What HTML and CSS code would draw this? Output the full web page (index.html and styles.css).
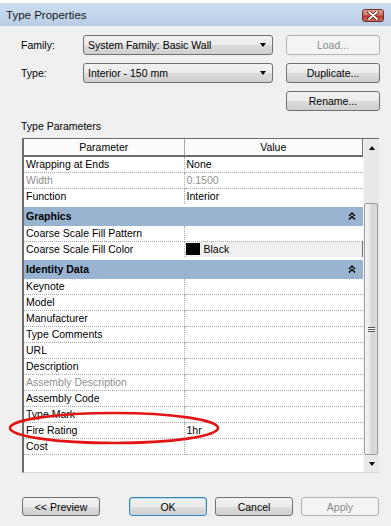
FILE: index.html
```html
<!DOCTYPE html>
<html lang="en">
<head>
  <meta charset="UTF-8">
  <title>Type Properties</title>
  <link rel="stylesheet" href="styles.css">
</head>
<body>
  <div class="window">

    <!-- Title Bar -->
    <div class="titlebar">
      <span class="title">Type Properties</span>
      <button class="close-btn">
        <svg width="12" height="9" viewBox="0 0 12 9">
          <path d="M2 1 L10 8 M10 1 L2 8" stroke="#5a1e16" stroke-width="3.4" stroke-linecap="round"/>
          <path d="M2 1 L10 8 M10 1 L2 8" stroke="#fff" stroke-width="1.8" stroke-linecap="round"/>
        </svg>
      </button>
    </div>

    <!-- Family / Type -->
    <div class="type-form">
      <label>Family:</label>
      <div class="combo"><span>System Family: Basic Wall</span><span class="arrow"></span></div>
      <button class="btn" disabled>Load...</button>

      <label>Type:</label>
      <div class="combo"><span>Interior - 150 mm</span><span class="arrow"></span></div>
      <button class="btn">Duplicate...</button>

      <span></span>
      <span></span>
      <button class="btn">Rename...</button>
    </div>

    <div class="section-label">Type Parameters</div>

    <!-- Parameters Grid -->
    <div class="grid-box">
      <div class="grid-body">
        <table class="params">
          <colgroup><col class="col-name"><col class="col-value"></colgroup>
          <thead>
            <tr><th>Parameter</th><th class="last">Value</th></tr>
          </thead>
          <tbody>
            <tr><td class="name">Wrapping at Ends</td><td>None</td></tr>
            <tr class="disabled"><td class="name">Width</td><td>0.1500</td></tr>
            <tr><td class="name">Function</td><td>Interior</td></tr>
            <tr class="group"><td colspan="2">Graphics<span class="chevron"><svg width="8" height="8" viewBox="0 0 8 8"><path d="M1 4 L4 1 L7 4 M1 7.5 L4 4.5 L7 7.5" fill="none" stroke="#000" stroke-width="1.4"/></svg></span></td></tr>
            <tr><td class="name">Coarse Scale Fill Pattern</td><td></td></tr>
            <tr><td class="name">Coarse Scale Fill Color</td><td class="color-cell"><span class="swatch"></span>Black</td></tr>
            <tr class="group"><td colspan="2">Identity Data<span class="chevron"><svg width="8" height="8" viewBox="0 0 8 8"><path d="M1 4 L4 1 L7 4 M1 7.5 L4 4.5 L7 7.5" fill="none" stroke="#000" stroke-width="1.4"/></svg></span></td></tr>
            <tr><td class="name">Keynote</td><td></td></tr>
            <tr><td class="name">Model</td><td></td></tr>
            <tr><td class="name">Manufacturer</td><td></td></tr>
            <tr><td class="name">Type Comments</td><td></td></tr>
            <tr><td class="name">URL</td><td></td></tr>
            <tr><td class="name">Description</td><td></td></tr>
            <tr class="disabled"><td class="name">Assembly Description</td><td></td></tr>
            <tr><td class="name">Assembly Code</td><td></td></tr>
            <tr><td class="name">Type Mark</td><td></td></tr>
            <tr><td class="name">Fire Rating</td><td>1hr</td></tr>
            <tr><td class="name">Cost</td><td></td></tr>
          </tbody>
        </table>
      </div>

      <!-- Scrollbar -->
      <div class="scrollbar">
        <div class="scroll-arrow"><span class="tri-up"></span></div>
        <div class="scroll-track">
          <div class="thumb"><span class="grip"></span></div>
        </div>
        <div class="scroll-arrow"><span class="tri-down"></span></div>
      </div>
    </div>

    <!-- Dialog Buttons -->
    <div class="footer">
      <button class="btn preview">&lt;&lt; Preview</button>
      <button class="btn default">OK</button>
      <button class="btn">Cancel</button>
      <button class="btn" disabled>Apply</button>
    </div>

    <!-- Red highlight drawn over the grid -->
    <svg class="highlight" width="391" height="526" viewBox="0 0 391 526">
      <ellipse cx="114" cy="428" rx="104" ry="15" fill="none" stroke="#e31414" stroke-width="2.6"/>
    </svg>
  </div>
</body>
</html>
```

FILE: styles.css
```css
/* Reset and Basic Styles */
* {
  margin: 0;
  padding: 0;
  box-sizing: border-box;
}

body {
  background: #f0f0f0;
  font-family: 'Liberation Sans', Arial, sans-serif;
  font-size: 10.5px;
  color: #000;
}

.window {
  position: relative;
  width: 391px;
  height: 526px;
  background: #f0f0f0;
  border-top: 3px solid #fff;
  overflow: hidden;
}

/* Title Bar */
.titlebar {
  height: 23px;
  display: flex;
  justify-content: space-between;
  align-items: flex-start;
  padding: 0 7px 0 6px;
  background: linear-gradient(#cddef1, #b8cce4);
}

.title {
  font-size: 11.5px;
  line-height: 24px;
  color: #1a1a1a;
}

.close-btn {
  margin-top: 6px;
  width: 22px;
  height: 13px;
  border: 1px solid #6a2c24;
  border-radius: 3px;
  background: linear-gradient(#e5a595, #cf6f5c 45%, #b8382a 55%, #d0705c);
  display: flex;
  align-items: center;
  justify-content: center;
}

/* Family / Type Form */
.type-form {
  display: grid;
  grid-template-columns: 62px 203px 94px;
  grid-auto-rows: 20px;
  row-gap: 8px;
  padding: 9px 0 0 21px;
  align-items: center;
}

.combo {
  width: 190px;
  height: 20px;
  display: flex;
  align-items: center;
  padding: 0 6px 0 4px;
  border: 1px solid #707070;
  border-radius: 3px;
  background: linear-gradient(#f2f2f2 0%, #ebebeb 50%, #dddddd 50%, #cfcfcf 100%);
}

.combo .arrow {
  margin-left: auto;
  border-left: 3.5px solid transparent;
  border-right: 3.5px solid transparent;
  border-top: 4px solid #000;
}

.btn {
  height: 20px;
  border: 1px solid #707070;
  border-radius: 3px;
  background: linear-gradient(#f2f2f2 0%, #ebebeb 50%, #dddddd 50%, #cfcfcf 100%);
  font-family: inherit;
  font-size: 10.5px;
  color: #000;
}

.btn:disabled {
  border-color: #adb2b5;
  background: #f4f4f4;
  color: #8a8a8a;
}

.section-label {
  margin: 8px 0 5px 21px;
  line-height: 14px;
}

/* Parameters Grid */
.grid-box {
  display: flex;
  margin-left: 22px;
  width: 357px;
  height: 335px;
  border-top: 1px solid #6d6d6d;
  border-left: 2px solid #6d6d6d;
  border-bottom: 1px solid #d8d8d8;
}

.grid-body {
  width: 339px;
  background: #fff;
}

.params {
  width: 339px;
  border-collapse: collapse;
  table-layout: fixed;
}

.col-name { width: 160px; }
.col-value { width: 179px; }

.params th {
  height: 17px;
  padding: 0;
  line-height: 15px;
  font-weight: normal;
  background: #fcfcfc;
  border-right: 1px solid #a8a8a8;
  border-bottom: 2px solid #6d6d6d;
}

.params th.last {
  border-right: 2px solid #6d6d6d;
}

.params td {
  height: 16px;
  padding: 0 0 1px 2px;
  line-height: 14px;
  border-bottom: 1px dotted #a8a8a8;
  white-space: nowrap;
  overflow: hidden;
}

.params td.name {
  border-right: 1px dotted #a8a8a8;
}

.params tr.disabled td {
  color: #8f8f8f;
}

.params tr.group td {
  height: 20px;
  padding-top: 0;
  border-top: 3px solid #fff;
  border-bottom: none;
  background: #99b4d1;
  font-weight: bold;
}

.chevron {
  float: right;
  margin: 3px 7px 0 0;
  line-height: 0;
}

.params td.color-cell {
  padding-left: 1px;
  background: #f0f0f0;
  border-right: 2px solid #6d6d6d;
  border-bottom: 2px solid #6d6d6d;
}

.swatch {
  display: inline-block;
  width: 14px;
  height: 12px;
  margin-right: 4px;
  vertical-align: -2px;
  background: #000;
}

/* Scrollbar */
.scrollbar {
  width: 16px;
  display: flex;
  flex-direction: column;
  background: #e9e9e9;
  border-left: 1px solid #f6f6f6;
}

.scroll-arrow {
  height: 17px;
  display: flex;
  align-items: center;
  justify-content: center;
}

.tri-up {
  border-left: 3.5px solid transparent;
  border-right: 3.5px solid transparent;
  border-bottom: 4px solid #000;
}

.tri-down {
  border-left: 3.5px solid transparent;
  border-right: 3.5px solid transparent;
  border-top: 4px solid #000;
}

.scroll-track {
  flex: 1;
  padding-top: 47px;
}

.thumb {
  width: 14px;
  height: 252px;
  border: 1px solid #9b9b9b;
  border-radius: 2px;
  background: linear-gradient(90deg, #f5f5f5, #e4e4e4 50%, #d6d6d6 50%, #dcdcdc);
  display: flex;
  align-items: center;
  justify-content: center;
}

.grip {
  width: 7px;
  height: 5px;
  border-top: 1px solid #555;
  border-bottom: 1px solid #555;
  background: linear-gradient(#fff 40%, #555 40%, #555 60%, #fff 60%);
}

/* Dialog Buttons */
.footer {
  display: flex;
  gap: 8px;
  margin-top: 24px;
  padding-left: 22px;
}

.footer .btn {
  width: 78px;
  height: 19px;
}

.footer .preview {
  margin-right: 21px;
}

.footer .default {
  border-color: #3c7fb1;
  box-shadow: inset 0 0 0 1px #b4dcf2;
}

/* Highlight Overlay */
.highlight {
  position: absolute;
  top: -3px;
  left: 0;
  pointer-events: none;
}
```
